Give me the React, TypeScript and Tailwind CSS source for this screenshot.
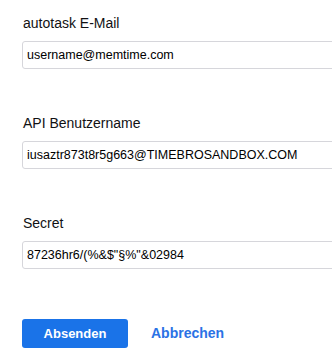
const FIELDS = [
  { label: "autotask E-Mail", value: "username@memtime.com" },
  { label: "API Benutzername", value: "iusaztr873t8r5g663@TIMEBROSANDBOX.COM" },
  { label: "Secret", value: '87236hr6/(%&$"§%"&02984' },
];

export default function App() {
  return (
    <div className="h-[364px] w-[332px] overflow-hidden bg-white font-['Liberation_Sans',Arial,sans-serif] text-[#111113]">
      <form className="flex flex-col gap-[44px] pl-[22px] pt-[13px]">
        {FIELDS.map((field) => (
          <div key={field.label} className="flex flex-col">
            <label className="mb-2 pl-px text-[14px] leading-5">{field.label}</label>
            <input
              readOnly
              value={field.value}
              className="h-[28px] w-[360px] rounded-[3px] border border-[#d6d6db] px-1 text-[12.5px] text-black outline-none"
            />
          </div>
        ))}
        <div className="mt-[6px] flex items-center gap-[23px]">
          <button
            type="button"
            className="h-[29px] w-[106px] rounded-[3px] bg-[#1a73e8] text-[13px] font-bold text-white"
          >
            Absenden
          </button>
          <button type="button" className="text-[14px] font-semibold text-[#2a72e5]">
            Abbrechen
          </button>
        </div>
      </form>
    </div>
  );
}
